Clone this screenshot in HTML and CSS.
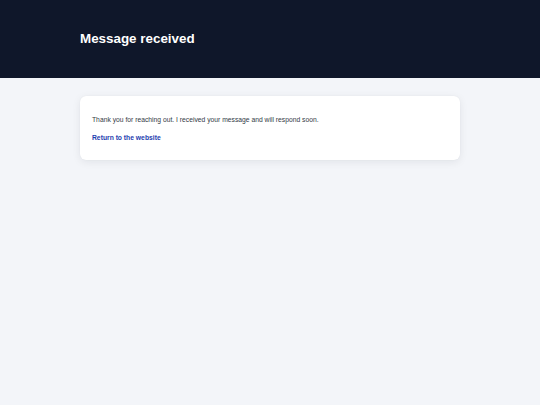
FILE: index.html
```html
<!DOCTYPE html>
<html lang="en">
<head>
<meta charset="utf-8">
<title>Message received</title>
<link rel="stylesheet" href="styles.css">
</head>
<body>
<header class="hero">
  <div class="wrap">
    <h1 class="title">Message received</h1>
  </div>
</header>
<main class="wrap">
  <section class="card">
    <p class="msg">Thank you for reaching out. I received your message and will respond soon.</p>
    <a class="back" href="#">Return to the website</a>
  </section>
</main>
</body>
</html>
```
FILE: styles.css
```css
* { box-sizing: border-box; }
html, body { margin: 0; padding: 0; }
body {
  background: #f3f5f9;
  font-family: "Liberation Sans", Arial, sans-serif;
  color: #333a45;
  min-height: 405px;
}
.wrap {
  width: 380px;
  margin: 0 auto;
}
.hero {
  background: #0f172a;
  height: 78px;
  display: flex;
  align-items: center;
}
.title {
  margin: 0;
  color: #ffffff;
  font-size: 13.4px;
  font-weight: 700;
  line-height: 1;
}
main.wrap { padding-top: 18px; }
.card {
  background: #ffffff;
  border-radius: 6px;
  box-shadow: 0 2px 8px rgba(15, 23, 42, 0.08), 0 0 1px rgba(15, 23, 42, 0.08);
  padding: 19px 12px 17px;
  display: flex;
  flex-direction: column;
  align-items: flex-start;
  gap: 8px;
}
.msg {
  margin: 0;
  font-size: 6.75px;
  line-height: 10px;
}
.back {
  font-size: 6.75px;
  line-height: 10px;
  font-weight: 700;
  color: #1e40af;
  text-decoration: none;
}
```
